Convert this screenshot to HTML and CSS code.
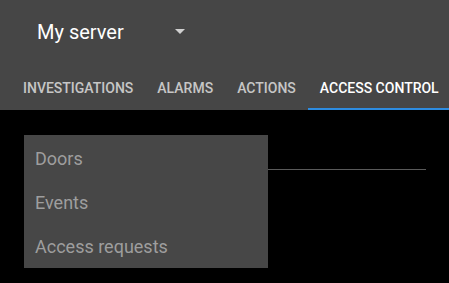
FILE: index.html
```html
<!DOCTYPE html>
<html>
<head>
<meta charset="utf-8">
<link rel="stylesheet" href="styles.css">
</head>
<body>
<header class="appbar">
  <div class="title-row">
    <div class="server-select">
      <span class="server-name">My server</span>
      <span class="caret"></span>
    </div>
  </div>
  <nav class="tabs">
    <div class="tab">INVESTIGATIONS</div>
    <div class="tab">ALARMS</div>
    <div class="tab">ACTIONS</div>
    <div class="tab active">ACCESS CONTROL</div>
  </nav>
</header>
<main class="content">
  <div class="field">
    <div class="field-line"></div>
    <ul class="menu">
      <li class="menu-item">Doors</li>
      <li class="menu-item">Events</li>
      <li class="menu-item">Access requests</li>
    </ul>
  </div>
</main>
</body>
</html>
```

FILE: styles.css
```css
* { box-sizing: border-box; }
html {
  overflow: hidden;
  background: #000;
}
body {
  margin: 0;
  padding: 0;
  background: #000;
  font-family: Roboto, "Noto Sans", sans-serif;
}
.appbar {
  background: #464646;
  height: 110px;
}
.title-row {
  height: 64px;
  display: flex;
  align-items: center;
  padding-left: 37px;
}
.server-select {
  display: flex;
  align-items: center;
  width: 148px;
  justify-content: space-between;
}
.server-name {
  color: #fff;
  font-size: 20px;
  line-height: 24px;
}
.caret {
  width: 0;
  height: 0;
  border-left: 5px solid transparent;
  border-right: 5px solid transparent;
  border-top: 5px solid #d0d0d0;
  margin-top: -1px;
}
.tabs {
  display: flex;
  padding-left: 11px;
  white-space: nowrap;
}
.tab {
  font-size: 14px;
  font-weight: 500;
  line-height: 16px;
  padding: 16px 12px 12px;
  border-bottom: 2px solid transparent;
  color: #c6c6c6;
}
.tab.active {
  color: #fff;
  border-bottom-color: #2d8ce0;
}
.content {
  padding: 59px 23px 0 24px;
}
.field {
  position: relative;
  height: 110px;
}
.field-line {
  border-top: 1px solid #5a5a5a;
  width: 402px;
}
.menu {
  position: absolute;
  left: 0;
  top: -34px;
  width: 244px;
  height: 133px;
  margin: 0;
  padding: 2px 0 0;
  list-style: none;
  background: #474747;
}
.menu-item {
  font-size: 18px;
  line-height: 44px;
  height: 44px;
  padding-left: 11px;
  color: #9e9e9e;
}
```
